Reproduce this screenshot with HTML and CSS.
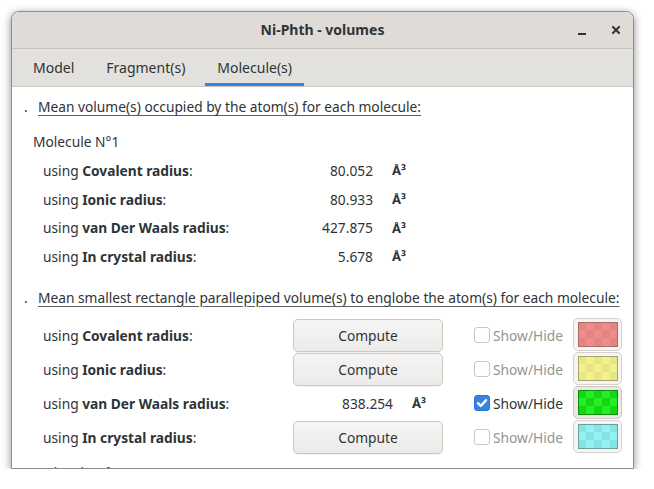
FILE: index.html
```html
<!DOCTYPE html>
<html lang="en">
<head>
<meta charset="utf-8">
<title>Ni-Phth - volumes</title>
<link rel="stylesheet" href="styles.css">
</head>
<body>
<div class="window">
  <header class="titlebar">
    <span class="spacer"></span>
    <span class="title">Ni-Phth - volumes</span>
    <div class="controls">
      <span class="btn-min"></span>
      <svg class="btn-close" width="8" height="8" viewBox="0 0 8 8"><path d="M1 1L7 7M7 1L1 7" stroke="#2e3436" stroke-width="2" stroke-linecap="square"/></svg>
    </div>
  </header>
  <nav class="tabs">
    <span class="tab">Model</span>
    <span class="tab">Fragment(s)</span>
    <span class="tab active">Molecule(s)</span>
  </nav>
  <main class="content">
    <p class="heading h1"><span class="dot">.</span><span class="u">Mean volume(s) occupied by the atom(s) for each molecule:</span></p>
    <p class="mol">Molecule N°1</p>
    <div class="vol-grid">
      <span class="lbl">using <b>Covalent radius</b>:</span><span class="num">80.052</span><span class="unit">Å³</span>
      <span class="lbl">using <b>Ionic radius</b>:</span><span class="num">80.933</span><span class="unit">Å³</span>
      <span class="lbl">using <b>van Der Waals radius</b>:</span><span class="num">427.875</span><span class="unit">Å³</span>
      <span class="lbl">using <b>In crystal radius</b>:</span><span class="num">5.678</span><span class="unit">Å³</span>
    </div>
    <p class="heading h2"><span class="dot">.</span><span class="u">Mean smallest rectangle parallepiped volume(s) to englobe the atom(s) for each molecule:</span></p>
    <div class="box-grid">
      <span class="lbl">using <b>Covalent radius</b>:</span>
      <button class="compute">Compute</button>
      <label class="check"><span class="box"></span>Show/Hide</label>
      <span class="swatch-btn"><span class="swatch red"></span></span>

      <span class="lbl">using <b>Ionic radius</b>:</span>
      <button class="compute">Compute</button>
      <label class="check"><span class="box"></span>Show/Hide</label>
      <span class="swatch-btn"><span class="swatch yellow"></span></span>

      <span class="lbl">using <b>van Der Waals radius</b>:</span>
      <span class="value"><span class="num">838.254</span><span class="unit">Å³</span></span>
      <label class="check on"><span class="box"><svg width="16" height="16" viewBox="0 0 16 16"><path d="M4 8.2L6.8 11L12 5.2" fill="none" stroke="#fff" stroke-width="2.4" stroke-linecap="round" stroke-linejoin="round"/></svg></span>Show/Hide</label>
      <span class="swatch-btn pressed"><span class="swatch green"></span></span>

      <span class="lbl">using <b>In crystal radius</b>:</span>
      <button class="compute">Compute</button>
      <label class="check"><span class="box"></span>Show/Hide</label>
      <span class="swatch-btn"><span class="swatch cyan"></span></span>
    </div>
    <p class="mol mol2">Molecule N°2</p>
  </main>
</div>
</body>
</html>
```

FILE: styles.css
```css
* { box-sizing: border-box; }
body {
  margin: 0;
  padding: 11px 0 0 11px;
  background: #ffffff;
  font-family: "Noto Sans", "DejaVu Sans", sans-serif;
  font-size: 13.75px;
  color: #2e3436;
}
.window {
  width: 623px;
  height: 458px;
  border: 1px solid #8f8d8a;
  border-radius: 8px 8px 0 0;
  box-shadow: 0 2px 9px rgba(0,0,0,0.45);
  display: flex;
  flex-direction: column;
  overflow: hidden;
  background: #fff;
}
.titlebar {
  flex: none;
  height: 37px;
  display: grid;
  grid-template-columns: 1fr auto 1fr;
  align-items: center;
  background: #dfdcd8;
  border-bottom: 1px solid #c6c2bd;
  padding-bottom: 1px;
}
.title { font-weight: bold; color: #2e3436; font-size: 14px; }
.controls {
  justify-self: end;
  display: flex;
  align-items: center;
  gap: 26px;
  padding-right: 13px;
}
.btn-min {
  width: 8px;
  height: 2px;
  background: #2e3436;
  margin-top: 8px;
}
.btn-close { display: block; margin-top: 1px; }
.tabs {
  flex: none;
  height: 38px;
  display: flex;
  gap: 8px;
  padding-left: 9px;
  background: #e3e1de;
  border-bottom: 1px solid #cdc7c2;
}
.tab {
  padding: 0 12px;
  display: flex;
  align-items: center;
  border-bottom: 3px solid transparent;
  padding-top: 2px;
  color: #2e3436;
  font-size: 14px;
}
.tab.active { border-bottom-color: #3584e4; }
.content {
  flex: 1;
  overflow: hidden;
  padding-left: 12px;
  padding-top: 10px;
}
.heading {
  margin: 0;
  height: 20px;
  line-height: 20px;
  display: flex;
}
.dot { width: 14px; }
.u { text-decoration: underline; text-underline-offset: 3px; text-decoration-color: #5c6163; }
.mol {
  margin: 15px 0 0 9px;
  line-height: 20px;
}
.vol-grid {
  margin-top: 4px;
  margin-left: 19px;
  display: grid;
  grid-template-columns: 260px 70px 20px;
  grid-auto-rows: 28.7px;
  align-items: center;
}
.num { text-align: right; }
.unit { font-weight: bold; font-size: 13px; padding-left: 19px; white-space: nowrap; }
.h2 { margin-top: 17px; }
.box-grid {
  margin-top: 11px;
  margin-left: 19px;
  display: grid;
  grid-template-columns: 250px 150px 130px 49px;
  grid-auto-rows: 34px;
  align-items: start;
}
.box-grid .lbl { line-height: 33px; }
.compute {
  height: 33px;
  width: 150px;
  font: inherit;
  color: #2e3436;
  border: 1px solid #cdc7c2;
  border-radius: 5px;
  background: linear-gradient(#f6f5f4, #edebe9);
  box-shadow: 0 1px 0 rgba(0,0,0,0.05);
  padding: 0;
}
.value {
  display: flex;
  height: 33px;
  align-items: center;
}
.value .num { width: 100px; }
.check {
  height: 33px;
  display: flex;
  align-items: center;
  margin-left: 31px;
  gap: 3px;
  color: #929595;
}
.check .box {
  width: 16px;
  height: 16px;
  border: 1px solid #cdc7c2;
  border-radius: 3px;
  background: #fff;
  display: block;
}
.check.on { color: #2e3436; }
.check.on .box { background: #3584e4; border-color: #2a76d4; }
.check.on .box svg { display: block; margin: -1px 0 0 -1px; }
.swatch-btn {
  width: 49px;
  height: 33px;
  margin-top: -1px;
  border: 1px solid #d6d1cd;
  border-radius: 5px;
  background: #f6f5f4;
  display: flex;
  align-items: center;
  justify-content: center;
}
.swatch-btn.pressed { background: #ebe9e6; border-color: #cdc7c2; }
.swatch {
  width: 40px;
  height: 25px;
  border: 1px solid var(--b);
  background: repeating-conic-gradient(var(--c1) 0 25%, var(--c2) 0 50%) -1px -1px / 16px 16px;
}
.red { --c1: #ee8c8c; --c2: #e58383; --b: #a86a6a; }
.yellow { --c1: #f3f08e; --c2: #e8e585; --b: #a8a56a; }
.green { --c1: #24ee24; --c2: #14d614; --b: #0c8f0c; }
.cyan { --c1: #94f1f1; --c2: #87e3e3; --b: #6b9f9f; }
.mol2 { margin-top: 8px; }
```
